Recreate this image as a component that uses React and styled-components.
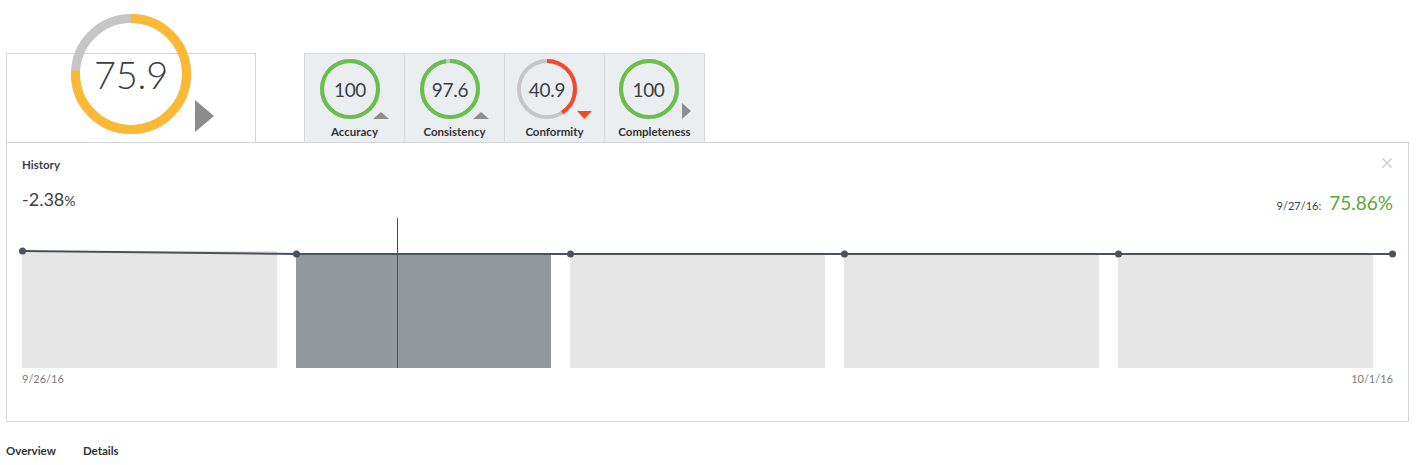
import styled, { createGlobalStyle } from "styled-components";

const GlobalStyle = createGlobalStyle`
  body {
    margin: 0;
    background: #fff;
    font-family: Lato, "Liberation Sans", sans-serif;
    color: #3b4047;
  }
`;

const metrics = [
  { name: "Accuracy", value: 100, color: "#6abf4b", trend: "up" },
  { name: "Consistency", value: 97.6, color: "#6abf4b", trend: "up" },
  { name: "Conformity", value: 40.9, color: "#f4492f", trend: "down" },
  { name: "Completeness", value: 100, color: "#6abf4b", trend: "flat" },
];

// history points (svg y inside the chart), bar index 1 is selected
const points = [33, 36, 36, 36, 36, 36];
const STEP = 274;
const BAR_W = 255;

function Ring({ size, stroke, value, color, fontSize, weight }) {
  const r = (size - stroke) / 2;
  const c = 2 * Math.PI * r;
  const filled = (c * value) / 100;
  return (
    <RingBox $size={size}>
      <svg width={size} height={size}>
        <circle cx={size / 2} cy={size / 2} r={r} fill="none" stroke="#c6c6c6" strokeWidth={stroke} />
        <circle
          cx={size / 2}
          cy={size / 2}
          r={r}
          fill="none"
          stroke={color}
          strokeWidth={stroke}
          strokeDasharray={`${filled} ${c}`}
          transform={`rotate(-90 ${size / 2} ${size / 2})`}
        />
      </svg>
      <RingValue $fontSize={fontSize} $weight={weight}>
        {value}
      </RingValue>
    </RingBox>
  );
}

function Trend({ dir }) {
  if (dir === "up")
    return (
      <TrendIcon $ml={-7} width="16" height="7" viewBox="0 0 16 7">
        <polygon points="8,0 16,7 0,7" fill="#8e8e8e" />
      </TrendIcon>
    );
  if (dir === "down")
    return (
      <TrendIcon $ml={0} width="15" height="8" viewBox="0 0 15 8">
        <polygon points="0,0 15,0 7.5,8" fill="#f4492f" />
      </TrendIcon>
    );
  return (
    <TrendIcon $ml={3} width="9" height="16" viewBox="0 0 9 16">
      <polygon points="0,0 9,8 0,16" fill="#8e8e8e" />
    </TrendIcon>
  );
}

export default function App() {
  return (
    <Page>
      <GlobalStyle />
      <Top>
        <ScoreCard>
          <Ring size={120} stroke={9} value={75.9} color="#fdb933" fontSize={38} weight={300} />
          <BigArrow width="19" height="32" viewBox="0 0 19 32">
            <polygon points="0,0 19,16 0,32" fill="#8c8c8c" />
          </BigArrow>
        </ScoreCard>
        <Metrics>
          {metrics.map((m) => (
            <MetricCell key={m.name}>
              <MetricRow>
                <Ring size={60} stroke={4} value={m.value} color={m.color} fontSize={19} weight={400} />
                <Trend dir={m.trend} />
              </MetricRow>
              <MetricLabel>{m.name}</MetricLabel>
            </MetricCell>
          ))}
        </Metrics>
      </Top>

      <HistoryPanel>
        <PanelHead>
          <PanelTitle>History</PanelTitle>
          <CloseIcon width="10" height="10" viewBox="0 0 10 10">
            <path d="M0.5 0.5 L9.5 9.5 M9.5 0.5 L0.5 9.5" stroke="#c9c9c9" strokeWidth="1.2" />
          </CloseIcon>
        </PanelHead>
        <ValueRow>
          <Change>
            -2.38<small>%</small>
          </Change>
          <Current>
            <CurrentDate>9/27/16:</CurrentDate>
            <CurrentValue>75.86%</CurrentValue>
          </Current>
        </ValueRow>
        <Chart width="1371" height="150">
          {[0, 1, 2, 3, 4].map((i) => (
            <rect
              key={i}
              x={STEP * i}
              y={points[i]}
              width={BAR_W}
              height={150 - points[i]}
              fill={i === 1 ? "#93979e" : "#e6e6e6"}
            />
          ))}
          <polyline
            points={points.map((y, i) => `${STEP * i + 0.5},${y}`).join(" ")}
            fill="none"
            stroke="#4a525c"
            strokeWidth="2"
          />
          {points.map((y, i) => (
            <circle key={i} cx={STEP * i + 0.5} cy={y} r="3.5" fill="#4a525c" />
          ))}
          <line x1="375.5" y1="0" x2="375.5" y2="150" stroke="#a8282c" strokeWidth="1" />
        </Chart>
        <Dates>
          <span>9/26/16</span>
          <span>10/1/16</span>
        </Dates>
      </HistoryPanel>

      <Tabs>
        <Tab>Overview</Tab>
        <Tab>Details</Tab>
      </Tabs>
    </Page>
  );
}

const Page = styled.div`
  padding: 53px 14px 0 6px;
`;

const Top = styled.div`
  display: flex;
  align-items: flex-start;
`;

const ScoreCard = styled.div`
  box-sizing: border-box;
  width: 250px;
  height: 89px;
  border: 1px solid #d6d6d6;
  border-bottom: none;
  display: flex;
  align-items: flex-start;
  padding-left: 64px;
  & > div:first-child {
    margin-top: -40px;
  }
`;

const BigArrow = styled.svg`
  margin: 46px 0 0 4px;
  flex: none;
`;

const RingBox = styled.div`
  position: relative;
  width: ${(p) => p.$size}px;
  height: ${(p) => p.$size}px;
  flex: none;
  svg {
    display: block;
  }
`;

const RingValue = styled.div`
  position: absolute;
  inset: 0;
  display: flex;
  align-items: center;
  justify-content: center;
  font-size: ${(p) => p.$fontSize}px;
  font-weight: ${(p) => p.$weight};
  color: #3b4047;
  letter-spacing: -0.3px;
`;

const Metrics = styled.div`
  box-sizing: border-box;
  height: 89px;
  margin-left: 48px;
  display: flex;
  background: #ebeef0;
  border-top: 1px solid #d6d9dc;
  border-left: 1px solid #d6d9dc;
`;

const MetricCell = styled.div`
  box-sizing: border-box;
  width: 100px;
  border-right: 1px solid #d6d9dc;
  padding-top: 5px;
  display: flex;
  flex-direction: column;
  align-items: center;
`;

const MetricRow = styled.div`
  display: flex;
  align-items: flex-end;
`;

const TrendIcon = styled.svg`
  flex: none;
  display: block;
  margin-left: ${(p) => p.$ml}px;
`;

const MetricLabel = styled.div`
  margin-top: 6px;
  font-size: 11.5px;
  line-height: 13px;
  font-weight: 700;
  color: #333;
`;

const HistoryPanel = styled.div`
  border: 1px solid #d6d6d6;
  padding: 15px 15px 36px;
`;

const PanelHead = styled.div`
  display: flex;
  justify-content: space-between;
  align-items: flex-start;
  height: 13px;
`;

const PanelTitle = styled.div`
  font-size: 11.5px;
  line-height: 13px;
  font-weight: 700;
  color: #3b4047;
`;

const CloseIcon = styled.svg`
  margin-right: 1px;
  display: block;
`;

const ValueRow = styled.div`
  margin-top: 17px;
  height: 30px;
  display: flex;
  justify-content: space-between;
  align-items: flex-start;
`;

const Change = styled.div`
  font-size: 18px;
  line-height: 22px;
  color: #3b4047;
  small {
    font-size: 14px;
  }
`;

const Current = styled.div`
  margin-top: 3px;
  display: flex;
  align-items: baseline;
  gap: 8px;
  line-height: 24px;
`;

const CurrentDate = styled.span`
  font-size: 11px;
  color: #3b4047;
`;

const CurrentValue = styled.span`
  font-size: 19px;
  color: #5aa53d;
`;

const Chart = styled.svg`
  display: block;
  overflow: visible;
`;

const Dates = styled.div`
  margin-top: 4px;
  display: flex;
  justify-content: space-between;
  font-size: 11px;
  line-height: 13px;
  color: #7c7c7c;
`;

const Tabs = styled.div`
  margin-top: 22px;
  display: flex;
  gap: 27px;
`;

const Tab = styled.div`
  font-size: 11.5px;
  line-height: 13px;
  font-weight: 700;
  color: #333;
`;
